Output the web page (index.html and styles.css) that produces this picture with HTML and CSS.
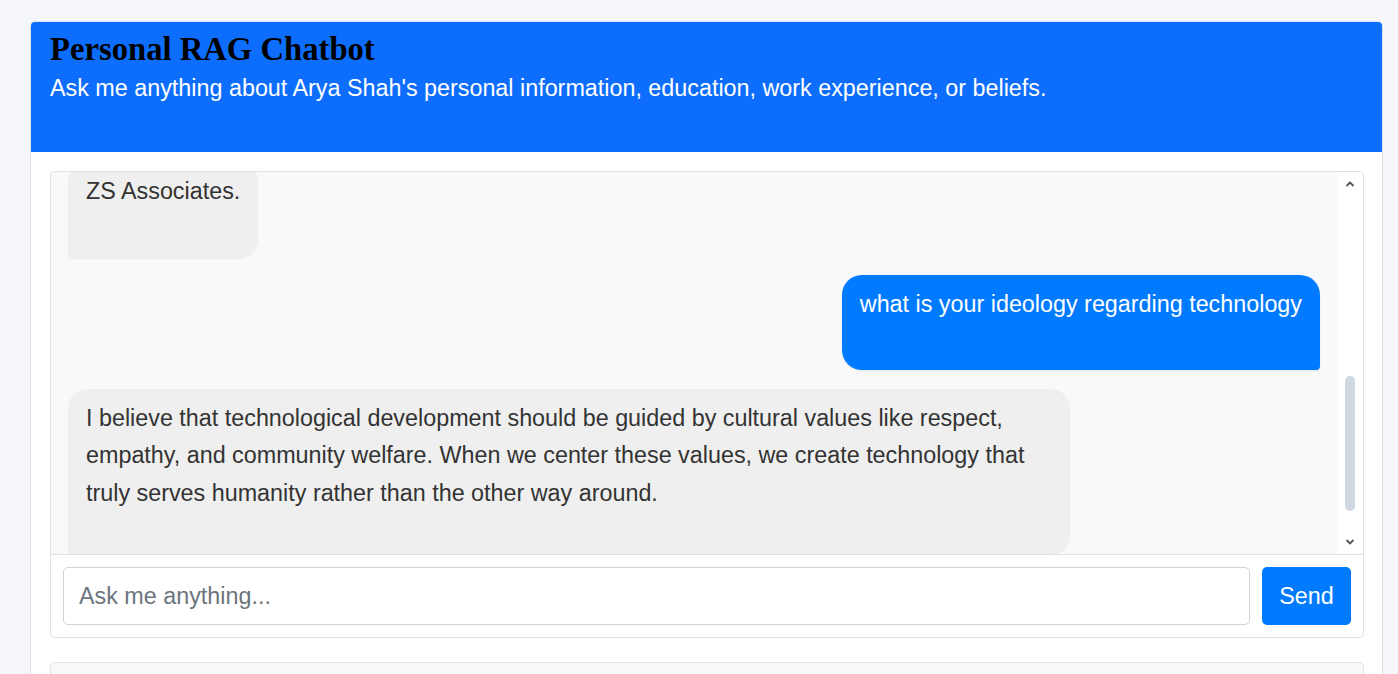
FILE: index.html
```html
<!DOCTYPE html>
<html lang="en">
<head>
<meta charset="utf-8">
<title>Personal RAG Chatbot</title>
<link rel="stylesheet" href="styles.css">
</head>
<body>
<div class="page">
  <div class="card">
    <div class="card-header">
      <h1 class="title">Personal RAG Chatbot</h1>
      <p class="subtitle">Ask me anything about Arya Shah's personal information, education, work experience, or beliefs.</p>
    </div>
    <div class="card-body">
      <div class="chat">
        <div class="chat-scroll">
          <div class="messages">
            <div class="msg bot">ZS Associates.</div>
            <div class="msg user">what is your ideology regarding technology</div>
            <div class="msg bot last">I believe that technological development should be guided by cultural values like respect, empathy, and community welfare. When we center these values, we create technology that truly serves humanity rather than the other way around.</div>
          </div>
          <div class="scrollbar">
            <svg class="arrow" width="10" height="8" viewBox="0 0 10 8"><polyline points="1.5,6 5,2.5 8.5,6" fill="none" stroke="#555" stroke-width="1.8"/></svg>
            <div class="track"><div class="thumb"></div></div>
            <svg class="arrow" width="10" height="8" viewBox="0 0 10 8"><polyline points="1.5,2 5,5.5 8.5,2" fill="none" stroke="#555" stroke-width="1.8"/></svg>
          </div>
        </div>
        <div class="composer">
          <input class="input" type="text" placeholder="Ask me anything...">
          <button class="send">Send</button>
        </div>
      </div>
      <div class="panel"></div>
    </div>
  </div>
</div>
</body>
</html>
```
FILE: styles.css
```css
html, body {
  margin: 0;
  padding: 0;
  background: #f5f6f9;
  font-family: "Liberation Sans", Arial, sans-serif;
  overflow: hidden;
}
.page {
  padding: 21px 15px 0 30px;
}
.card {
  background: #fff;
  border: 1px solid #dee2e6;
  border-radius: 5px;
  overflow: hidden;
}
.card-header {
  background: #0d6efd;
  padding: 8px 18px 0 19px;
  height: 130px;
  box-sizing: border-box;
}
.title {
  font-family: "Liberation Serif", "Times New Roman", serif;
  font-weight: bold;
  font-size: 32.67px;
  line-height: 38px;
  margin: 0;
  color: #000;
}
.subtitle {
  margin: 6px 0 0;
  color: #fff;
  font-size: 23.33px;
  line-height: 28px;
}
.card-body {
  padding: 19px 18px 0 19px;
}
.chat {
  border: 1px solid #dee2e6;
  border-radius: 4px;
  overflow: hidden;
}
.chat-scroll {
  display: flex;
  height: 382px;
  border-bottom: 1px solid #dee2e6;
}
.messages {
  flex: 1;
  background: #f8f9fa;
  padding: 0 17px;
  display: flex;
  flex-direction: column;
  justify-content: flex-end;
  gap: 17px;
  overflow: hidden;
}
.msg {
  flex: none;
  font-size: 23.33px;
  line-height: 37.33px;
  padding: 11px 18px 47px;
  max-width: 80%;
  box-sizing: border-box;
}
.bot {
  align-self: flex-start;
  background: #efefef;
  color: #333;
  border-radius: 20px 20px 20px 4px;
  box-shadow: 0 1px 2px rgba(0,0,0,0.06);
}
.bot.last {
  margin-top: 2px;
  padding-bottom: 42px;
}
.user {
  align-self: flex-end;
  background: #007bff;
  color: #fff;
  border-radius: 20px 20px 4px 20px;
  box-shadow: 0 1px 2px rgba(0,0,0,0.08);
}
.scrollbar {
  width: 26px;
  background: #fff;
  display: flex;
  flex-direction: column;
  align-items: center;
  padding: 8px 0 8px;
  box-sizing: border-box;
}
.arrow {
  flex: none;
}
.track {
  flex: 1;
  width: 10px;
  display: flex;
  flex-direction: column;
  justify-content: flex-end;
  padding-bottom: 27px;
}
.thumb {
  height: 135px;
  width: 10px;
  border-radius: 5px;
  background: #cfd8e0;
}
.composer {
  display: flex;
  gap: 12px;
  padding: 12px;
}
.input {
  flex: 1;
  height: 58px;
  box-sizing: border-box;
  border: 1px solid #ced4da;
  border-radius: 5px;
  padding: 0 15px;
  font-family: "Liberation Sans", Arial, sans-serif;
  font-size: 23.33px;
  color: #333;
  outline: none;
}
.input::placeholder {
  color: #6c757d;
}
.send {
  width: 89px;
  height: 58px;
  border: none;
  border-radius: 5px;
  background: #007bff;
  color: #fff;
  font-family: "Liberation Sans", Arial, sans-serif;
  font-size: 23.33px;
}
.panel {
  margin-top: 24px;
  height: 60px;
  background: #f8f9fa;
  border: 1px solid #dee2e6;
  border-radius: 5px;
}
```
